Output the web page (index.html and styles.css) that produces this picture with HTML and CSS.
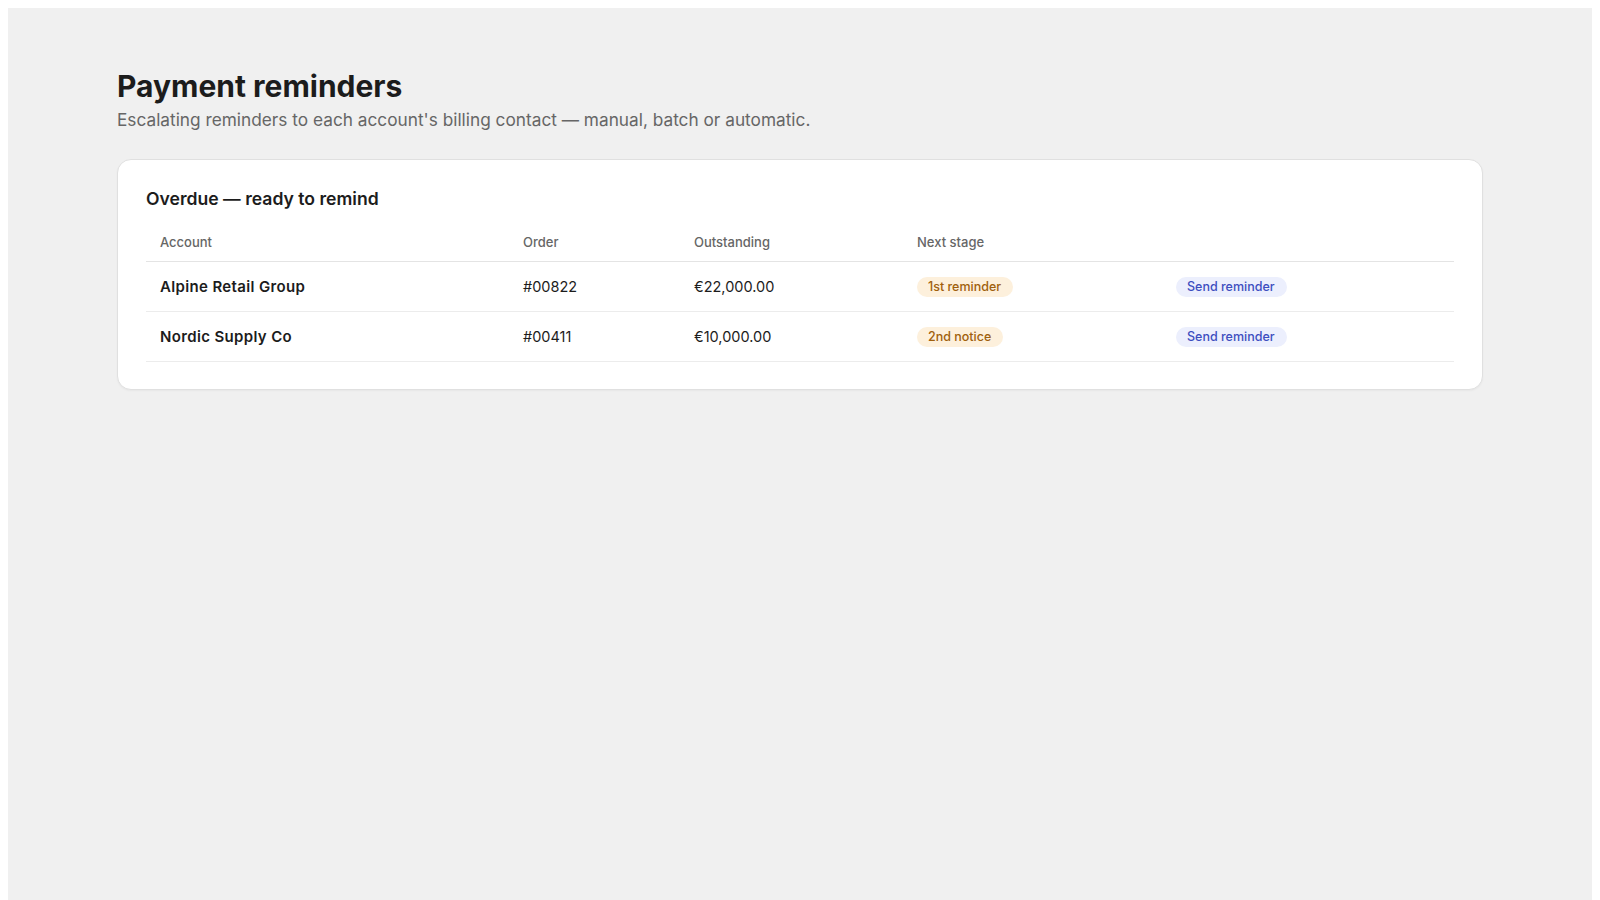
FILE: index.html
```html
<!DOCTYPE html>
<html>
<head>
  <title>Payment reminders</title>
  <link rel="stylesheet" href="styles.css">
</head>
<body>
  <div class="page">
    <div class="container">
      <h1>Payment reminders</h1>
      <p class="subtitle">Escalating reminders to each account's billing contact — manual, batch or automatic.</p>

      <div class="card">
        <h2>Overdue — ready to remind</h2>
        <table class="reminders">
          <thead>
            <tr>
              <th class="col-account">Account</th>
              <th class="col-order">Order</th>
              <th class="col-amount">Outstanding</th>
              <th class="col-stage">Next stage</th>
              <th class="col-action"></th>
            </tr>
          </thead>
          <tbody>
            <tr>
              <td class="account">Alpine Retail Group</td>
              <td>#00822</td>
              <td>€22,000.00</td>
              <td><span class="pill pill-stage">1st reminder</span></td>
              <td><button class="pill pill-send">Send reminder</button></td>
            </tr>
            <tr>
              <td class="account">Nordic Supply Co</td>
              <td>#00411</td>
              <td>€10,000.00</td>
              <td><span class="pill pill-stage">2nd notice</span></td>
              <td><button class="pill pill-send">Send reminder</button></td>
            </tr>
          </tbody>
        </table>
      </div>
    </div>
  </div>
</body>
</html>
```

FILE: styles.css
```css
body {
  margin: 8px;
  font-family: Inter, "Noto Sans", sans-serif;
  color: #1c1c1c;
  background: #fff;
}

.page {
  background: #f0f0f0;
  min-height: 100vh;
  padding: 60px 0 40px;
  box-sizing: border-box;
}

.container {
  max-width: 1366px;
  margin: 0 auto;
}

h1 {
  font-size: 30px;
  line-height: 36px;
  font-weight: 700;
  margin: 0 0 3px;
  color: #1c1c1c;
}

.subtitle {
  font-size: 17.25px;
  line-height: 25px;
  color: #666;
  margin: 0 0 27px;
}

.card {
  background: #fff;
  border: 1px solid #e0e0e0;
  border-radius: 14px;
  padding: 28px 28px 27px;
  box-shadow: 0 1px 2px rgba(0, 0, 0, 0.04);
}

.card h2 {
  font-size: 17.6px;
  line-height: 22px;
  font-weight: 600;
  margin: 0 0 13px;
}

.reminders {
  width: 100%;
  border-collapse: collapse;
  table-layout: fixed;
}

.reminders th {
  text-align: left;
  font-size: 13px;
  font-weight: 500;
  color: #666;
  line-height: 18px;
  padding: 10px 14px;
  border-bottom: 1px solid #e4e4e4;
}

.col-account { width: 335px; }
.col-order { width: 143px; }
.col-amount { width: 195px; }
.col-stage { width: 231px; }

.reminders td {
  font-size: 14.5px;
  line-height: 20px;
  padding: 14.5px 14px;
  border-bottom: 1px solid #ececec;
  vertical-align: middle;
}

.reminders td.account {
  font-size: 15px;
  font-weight: 600;
  letter-spacing: 0.35px;
}

.pill {
  display: inline-block;
  font-family: inherit;
  font-size: 12.5px;
  font-weight: 500;
  line-height: 20px;
  padding: 0 12px 0 11px;
  border-radius: 999px;
  border: none;
  vertical-align: top;
}

.pill-stage {
  background: #fdf0dc;
  color: #a0600c;
}

.pill-send {
  background: #eceffd;
  color: #3d4ec0;
  cursor: pointer;
}
```
